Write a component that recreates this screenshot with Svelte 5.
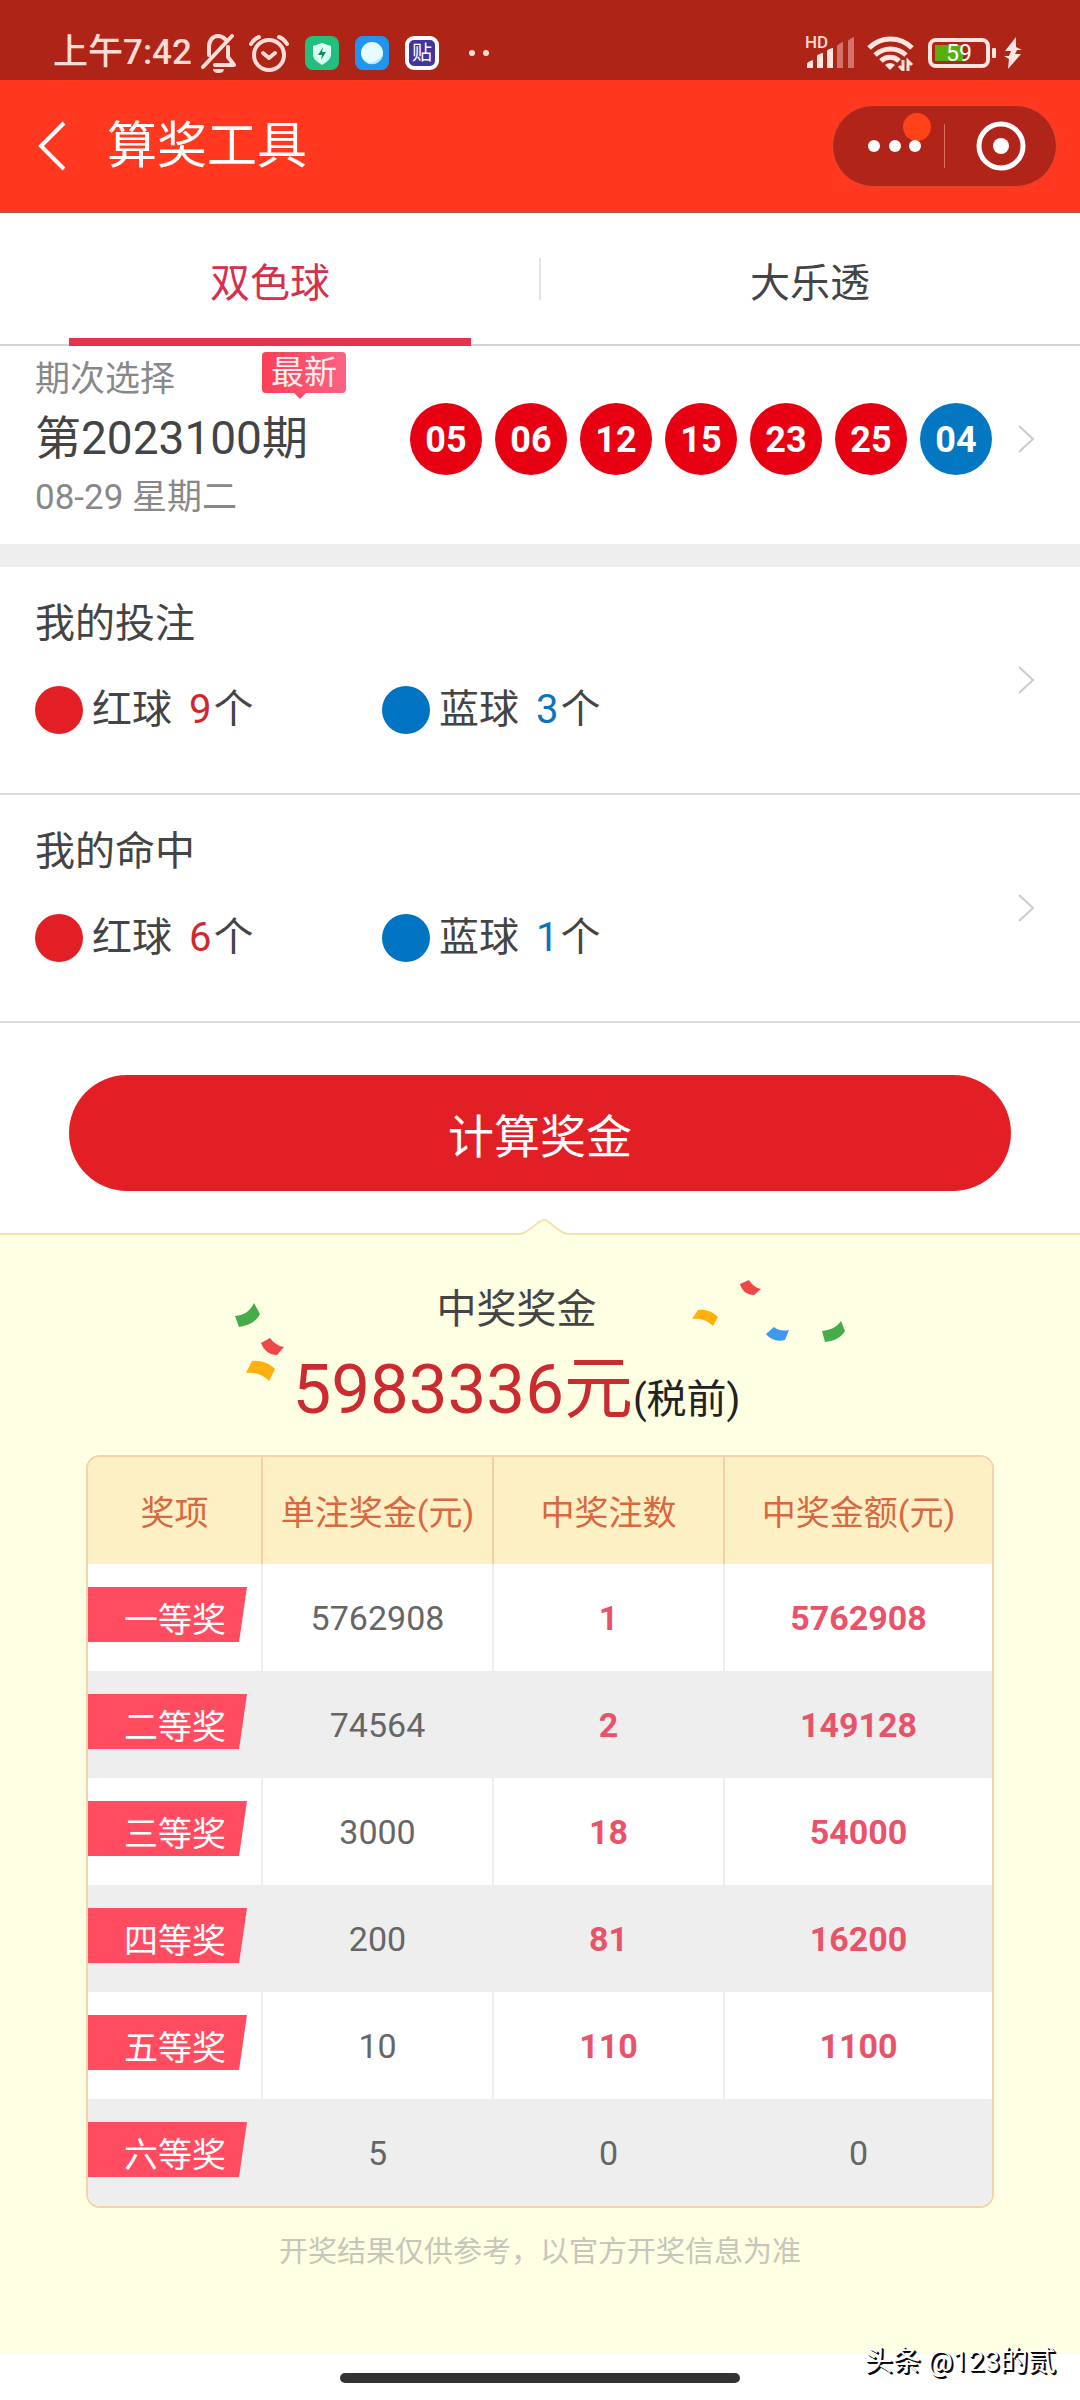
<script>
  let activeTab = 'ssq';

  const tabs = [
    { id: 'ssq', label: '双色球' },
    { id: 'dlt', label: '大乐透' }
  ];

  const draw = {
    issue: '第2023100期',
    date: '08-29 星期二',
    red: ['05', '06', '12', '15', '23', '25'],
    blue: ['04']
  };

  const sections = [
    { title: '我的投注', red: 9, blue: 3 },
    { title: '我的命中', red: 6, blue: 1 }
  ];

  const prizes = [
    { name: '一等奖', unit: 5762908, count: 1 },
    { name: '二等奖', unit: 74564, count: 2 },
    { name: '三等奖', unit: 3000, count: 18 },
    { name: '四等奖', unit: 200, count: 81 },
    { name: '五等奖', unit: 10, count: 110 },
    { name: '六等奖', unit: 5, count: 0 }
  ];

  $: total = prizes.reduce((sum, p) => sum + p.unit * p.count, 0);
</script>

<div class="page">
  <div class="status-bar">
    <div class="status-left">
      <span class="clock">上午7:42</span>
      <svg class="bell" width="36" height="40" viewBox="0 0 36 40" fill="none" stroke="#ffdcd6" stroke-width="4" stroke-linecap="round" stroke-linejoin="round">
        <path d="M8 22V14C8 7 12 3 17 3c3 0 5 1 7 3M27 14v10l6 8H14M2 34 31 3" />
        <path d="M13 37h9c-1 2-2 2-4 2s-4 0-5-2z" stroke-width="2" fill="#ffdcd6" />
      </svg>
      <svg class="alarm" width="40" height="38" viewBox="0 0 40 38" fill="none" stroke="#ffdcd6" stroke-width="4" stroke-linecap="round" stroke-linejoin="round">
        <circle cx="20" cy="21" r="15" />
        <path d="M14 19l6 5 6-5M2 10c2-3 4-6 8-7M38 10c-2-3-4-6-8-7" />
      </svg>
      <svg class="app" width="34" height="34" viewBox="0 0 34 34">
        <rect width="34" height="34" rx="8" fill="#23bf7c" />
        <path d="M17 7l9 3v8c0 5-4 8-9 11-5-3-9-6-9-11v-8z" fill="#d9fff2" />
        <path d="M18 11l-5 8h4l-1 5 5-8h-4z" fill="#128a5a" />
      </svg>
      <svg class="app" width="34" height="34" viewBox="0 0 34 34">
        <rect width="34" height="34" rx="8" fill="#1f95ee" />
        <circle cx="17" cy="17" r="11" fill="#e6fbff" />
        <path d="M28 17a11 11 0 0 1-16 10c7 0 13-3 16-10z" fill="#b9e6fb" />
      </svg>
      <span class="tie">贴</span>
      <svg class="more" width="20" height="6" viewBox="0 0 20 6" fill="#ffdcd6">
        <circle cx="3" cy="3" r="3" />
        <circle cx="17" cy="3" r="3" />
      </svg>
    </div>

    <div class="status-right">
      <span class="signal">
        <span class="hd">HD</span>
        <svg width="50" height="33" viewBox="0 0 50 33" fill="#ffe6e1">
          <path d="M2 32v-4q0-2 6-4v8zM12 32V20q1-2 6-3v15zM22 32V15q1-2 6-3v20z" />
          <path d="M32 32V10q1-2 6-4v26zM43 32V5q1-2 6-4v31z" fill="#d1736a" />
        </svg>
      </span>
      <svg class="wifi" width="47" height="36" viewBox="0 0 47 36" fill="none" stroke="#ffe6e1" stroke-width="5">
        <path d="M2 13c12-12 31-12 43 0" />
        <path d="M8 20c9-8 22-8 31 0" />
        <path d="M14 26c5-5 13-5 18 0" />
        <path d="M23 35l-5-5q5-4 10 0z" fill="#ffe6e1" stroke="none" />
        <path d="M36 25v10l-4-4M41 36V26l4 4" stroke-width="3" />
      </svg>
      <span class="battery">59</span>
      <svg class="bolt" width="18" height="32" viewBox="0 0 18 32" fill="#ffe6e1">
        <path d="M12 0 1 14h6L5 19H0l5 3-1 10 13-15h-6l2-4h5l-6-3z" />
      </svg>
    </div>
  </div>

  <header class="nav">
    <button class="back" aria-label="返回">
      <svg width="30" height="50" viewBox="0 0 30 50" fill="none" stroke="#fff" stroke-width="4">
        <path d="M27 2 4 25l23 23" />
      </svg>
    </button>
    <h1>算奖工具</h1>
    <div class="capsule">
      <button class="menu" aria-label="更多">
        <svg width="58" height="44" viewBox="0 0 58 44" fill="#fff">
          <circle cx="49" cy="14" r="14" fill="#ff4218" />
          <circle cx="6" cy="33" r="6" />
          <circle cx="27" cy="33" r="6" />
          <circle cx="47" cy="33" r="6" />
        </svg>
      </button>
      <button class="close" aria-label="关闭">
        <svg width="50" height="50" viewBox="0 0 50 50">
          <circle cx="25" cy="25" r="22" fill="none" stroke="#fff" stroke-width="5" />
          <circle cx="25" cy="25" r="8" fill="#fff" />
        </svg>
      </button>
    </div>
  </header>

  <nav class="tabs">
    {#each tabs as tab (tab.id)}
      <button class:active={activeTab === tab.id} on:click={() => (activeTab = tab.id)}>
        {tab.label}
      </button>
    {/each}
  </nav>

  <section class="draw">
    <div class="draw-info">
      <p class="muted">期次选择</p>
      <p class="issue">{draw.issue}</p>
      <p class="muted">{draw.date}</p>
      <span class="latest">最新</span>
    </div>
    <div class="balls">
      {#each draw.red as n}
        <span class="ball">{n}</span>
      {/each}
      {#each draw.blue as n}
        <span class="ball blue">{n}</span>
      {/each}
    </div>
    <svg class="arrow" width="16" height="28" viewBox="0 0 16 28"><path d="M1 1l14 13L1 27" /></svg>
  </section>

  {#each sections as section}
    <section class="picks">
      <div>
        <h2>{section.title}</h2>
        <div class="counts">
          <div class="count">
            <i class="dot"></i>
            <span>红球</span>
            <span class="amount"><b>{section.red}</b>个</span>
          </div>
          <div class="count blue">
            <i class="dot"></i>
            <span>蓝球</span>
            <span class="amount"><b>{section.blue}</b>个</span>
          </div>
        </div>
      </div>
      <svg class="arrow" width="16" height="28" viewBox="0 0 16 28"><path d="M1 1l14 13L1 27" /></svg>
    </section>
  {/each}

  <div class="action">
    <button>计算奖金</button>
  </div>

  <section class="result">
    <svg class="notch" width="48" height="16" viewBox="0 0 48 16">
      <path d="M0 16V15C9 14 18 1 24 1s14 13 24 14v1z" fill="#ffffe4" />
      <path d="M0 15C9 14 18 1 24 1s14 13 24 14" fill="none" stroke="#efe5ac" stroke-width="2" />
    </svg>

    <div class="result-head">
      <svg class="confetti left" width="50" height="79" viewBox="0 0 50 79">
        <path d="M0 13c10-1 15-5 19-13l6 11c-4 8-12 12-21 13z" fill="#45ac49" />
        <path d="M26 40l9-5c4 5 8 8 14 9l-7 8c-7 0-13-4-16-12z" fill="#ee4748" />
        <path d="M11 70l6-12c9-1 17 2 23 8l-6 12c-7-7-14-9-23-8z" fill="#fdb00e" />
      </svg>
      <svg class="confetti right" width="153" height="63" viewBox="0 0 153 63">
        <path d="M48 4l9-4c3 5 7 8 12 9l-7 6c-7 0-12-4-14-11z" fill="#ee4748" />
        <path d="M0 39l6-9c7-1 14 1 20 7l-5 9c-6-6-13-8-21-7z" fill="#fdb00e" />
        <path d="M74 54l8-7c5 4 10 4 15 3l-4 10c-8 2-14 0-19-6z" fill="#3f97ee" />
        <path d="M130 51c9-1 15-4 19-10l4 10c-4 7-11 10-20 11z" fill="#45ac49" />
      </svg>
      <h2>中奖奖金</h2>
      <p class="total"><strong>{total}元</strong>(税前)</p>
    </div>

    <div class="table-wrap">
      <table>
        <colgroup>
          <col class="c1" />
          <col class="c2" />
          <col class="c2" />
          <col />
        </colgroup>
        <thead>
          <tr>
            <th>奖项</th>
            <th>单注奖金(元)</th>
            <th>中奖注数</th>
            <th>中奖金额(元)</th>
          </tr>
        </thead>
        <tbody>
          {#each prizes as prize}
            <tr>
              <td class="name"><span>{prize.name}</span></td>
              <td>{prize.unit}</td>
              <td class:win={prize.count > 0}>{prize.count}</td>
              <td class:win={prize.count > 0}>{prize.unit * prize.count}</td>
            </tr>
          {/each}
        </tbody>
      </table>
    </div>

    <p class="notice">开奖结果仅供参考，以官方开奖信息为准</p>
  </section>

  <footer>
    <div class="home-bar"></div>
    <span class="watermark">头条 @123的贰</span>
  </footer>
</div>

<style>
  :global(body) {
    background: #fff;
  }

  .page {
    font-family: Roboto, 'Noto Sans CJK SC', sans-serif;
    font-size: 40px;
    color: #444;
    background: #fff;
  }

  .page :is(h1, h2, p) {
    margin: 0;
    font-weight: 400;
  }

  svg {
    display: block;
    flex: none;
  }

  button {
    font: inherit;
    color: inherit;
    background: none;
    border: 0;
    padding: 0;
    cursor: pointer;
  }

  .status-bar {
    display: flex;
    justify-content: space-between;
    height: 80px;
    padding: 25px 58px 0 53px;
    box-sizing: border-box;
    background: #ae2517;
    color: #ffdcd6;
  }

  .status-left,
  .status-right {
    display: flex;
    align-items: center;
  }

  .clock {
    font-size: 35px;
    font-weight: 500;
    line-height: 40px;
  }

  .bell {
    margin-left: 9px;
  }

  .alarm {
    margin: 0 16px 0 12px;
  }

  .app {
    margin-right: 16px;
  }

  .tie {
    width: 26px;
    height: 26px;
    border: 4px solid #fff;
    border-radius: 9px;
    background: #43359b;
    color: #fff;
    font-size: 20px;
    line-height: 26px;
    text-align: center;
  }

  .more {
    margin-left: 30px;
  }

  .signal {
    position: relative;
    margin-right: 12px;
  }

  .hd {
    position: absolute;
    left: 0;
    top: 0;
    font-size: 17px;
    font-weight: 500;
    line-height: 12px;
  }

  .battery {
    position: relative;
    width: 54px;
    height: 22px;
    margin: 0 14px;
    border: 4px solid #ffe6e1;
    border-radius: 8px;
    background: linear-gradient(#56b00c, #56b00c) 3px 3px / 28px 16px no-repeat;
    color: #fff;
    font-size: 23px;
    line-height: 24px;
    text-align: center;
  }

  .battery::after {
    content: '';
    position: absolute;
    right: -10px;
    top: 6px;
    width: 4px;
    height: 10px;
    border-radius: 1px;
    background: #ffe6e1;
  }

  .nav {
    display: flex;
    align-items: center;
    height: 133px;
    padding: 0 23px 0 37px;
    box-sizing: border-box;
    border-bottom: 2px solid #b4594b;
    background: #ff381f;
    color: #fff;
  }

  .nav h1 {
    flex: 1;
    margin-left: 40px;
    font-size: 50px;
    line-height: 60px;
  }

  .capsule {
    display: flex;
    align-items: center;
    width: 223px;
    height: 80px;
    border: 1px solid #e0492f;
    border-radius: 41px;
    background: #b12419;
  }

  .menu {
    width: 112px;
    height: 44px;
    padding: 0 18px 0 35px;
    border-right: 1px solid #d8705f;
    box-sizing: border-box;
  }

  .menu svg {
    margin-top: -22px;
    overflow: visible;
  }

  .close {
    display: flex;
    flex: 1;
    justify-content: center;
  }

  .tabs {
    display: flex;
    height: 133px;
    box-sizing: border-box;
    border-bottom: 2px solid #d4d4d4;
  }

  .tabs button {
    position: relative;
    flex: 1;
    padding-top: 3px;
  }

  .tabs button + button::before {
    content: '';
    position: absolute;
    left: -1px;
    top: 45px;
    width: 2px;
    height: 42px;
    background: #e4e4e4;
  }

  .tabs .active {
    color: #d5304c;
  }

  .tabs .active::after {
    content: '';
    position: absolute;
    left: 69px;
    right: 69px;
    bottom: -2px;
    height: 8px;
    background: #e5334e;
  }

  .draw {
    display: flex;
    align-items: center;
    justify-content: space-between;
    padding: 4px 46px 17px 35px;
    border-bottom: 23px solid #eee;
  }

  .draw-info {
    position: relative;
    flex: 1;
    line-height: 59px;
  }

  .muted {
    font-size: 35px;
    color: #888;
  }

  .issue {
    font-size: 46px;
  }

  .latest {
    position: absolute;
    left: 227px;
    top: 2px;
    padding: 0 9px;
    border-radius: 4px;
    background: linear-gradient(90deg, #fc3f56, #fa6383);
    color: #ffeef0;
    font-size: 33px;
    line-height: 41px;
  }

  .latest::after {
    content: '';
    position: absolute;
    left: 32px;
    top: 41px;
    border: 6px solid transparent;
    border-top-color: #fc4b64;
    border-bottom: 0;
  }

  .balls {
    display: flex;
    gap: 13px;
    margin-right: 26px;
  }

  .ball {
    width: 72px;
    height: 72px;
    border-radius: 50%;
    background: #e60012;
    color: #fff;
    font-size: 36px;
    font-weight: 700;
    line-height: 74px;
    text-align: center;
  }

  .ball.blue {
    background: #0477c3;
  }

  .arrow {
    fill: none;
    stroke: #ccc;
    stroke-width: 2;
  }

  .picks {
    display: flex;
    align-items: center;
    justify-content: space-between;
    padding: 27px 46px 58px 35px;
    border-bottom: 2px solid #dcdcdc;
  }

  .picks .arrow {
    margin-top: 31px;
  }

  .picks h2 {
    margin-bottom: 31px;
    font-size: 40px;
    line-height: 60px;
  }

  .counts {
    display: flex;
  }

  .count {
    display: flex;
    align-items: center;
    width: 347px;
    line-height: 50px;
  }

  .dot {
    width: 48px;
    height: 48px;
    margin-right: 9px;
    border-radius: 50%;
    background: #e31f26;
  }

  .amount {
    margin-left: 17px;
  }

  .amount b {
    margin-right: 2px;
    font-weight: 400;
    color: #d3252d;
  }

  .blue .dot {
    background: #0074c2;
  }

  .blue .amount b {
    color: #0b74bd;
  }

  .action {
    padding: 52px 69px 42px;
  }

  .action button {
    display: block;
    width: 100%;
    height: 116px;
    border-radius: 58px;
    background: #e31f26;
    color: #fff;
    font-size: 46px;
  }

  .result {
    position: relative;
    padding: 45px 86px 82px;
    border-top: 2px solid #efe5ac;
    background: #ffffe4;
  }

  .notch {
    position: absolute;
    left: 50%;
    top: -16px;
    margin-left: -20px;
  }

  .result-head {
    position: relative;
    width: 610px;
    margin: 0 auto;
    padding: 0 96px 0 49px;
    box-sizing: border-box;
    text-align: center;
  }

  .result-head h2 {
    font-size: 40px;
    line-height: 60px;
  }

  .total {
    line-height: 60px;
    color: #222;
    white-space: nowrap;
  }

  .total strong {
    font-size: 69px;
    font-weight: 400;
    line-height: 100px;
    color: #cb2a2f;
  }

  .confetti {
    position: absolute;
  }

  .confetti.left {
    left: 0;
    top: 23px;
  }

  .confetti.right {
    right: 0;
    top: 0;
  }

  .table-wrap {
    margin-top: 15px;
    border: 2px solid #f3d3ab;
    border-radius: 14px;
    overflow: hidden;
    background: #fff;
  }

  table {
    width: 100%;
    table-layout: fixed;
    border-collapse: separate;
    border-spacing: 0;
    font-size: 34px;
    color: #666;
    text-align: center;
  }

  .c1 {
    width: 175px;
  }

  .c2 {
    width: 231px;
  }

  th,
  td {
    height: 107px;
    padding: 0;
    border-right: 2px solid #eee;
    box-sizing: border-box;
  }

  th:last-child,
  td:last-child {
    border-right: 0;
  }

  th {
    border-color: #f3cfa8;
    background: #fdf0c4;
    color: #d9673f;
    font-weight: 400;
  }

  tbody tr:nth-child(even) {
    background: #eee;
  }

  .win {
    color: #e9536a;
    font-weight: 700;
  }

  .name span {
    display: block;
    width: 159px;
    height: 55px;
    padding: 6px 21px 0 0;
    margin-bottom: 6px;
    box-sizing: border-box;
    background: #ff4c60;
    clip-path: polygon(0 0, 100% 0, 95% 100%, 0 100%);
    color: #fff;
    line-height: 55px;
    text-align: right;
  }

  .page .notice {
    margin-top: 24px;
    font-size: 29px;
    line-height: 40px;
    color: #c6c6ba;
    text-align: center;
  }

  footer {
    position: relative;
    padding: 19px 0 17px;
  }

  .home-bar {
    width: 400px;
    height: 10px;
    margin: 0 auto;
    border-radius: 5px;
    background: #333;
  }

  .watermark {
    position: absolute;
    right: 24px;
    top: -12px;
    color: #fff;
    font-size: 28px;
    line-height: 40px;
    text-shadow: 1px 1px 0 #000, 2px 2px 0 #111;
  }
</style>
